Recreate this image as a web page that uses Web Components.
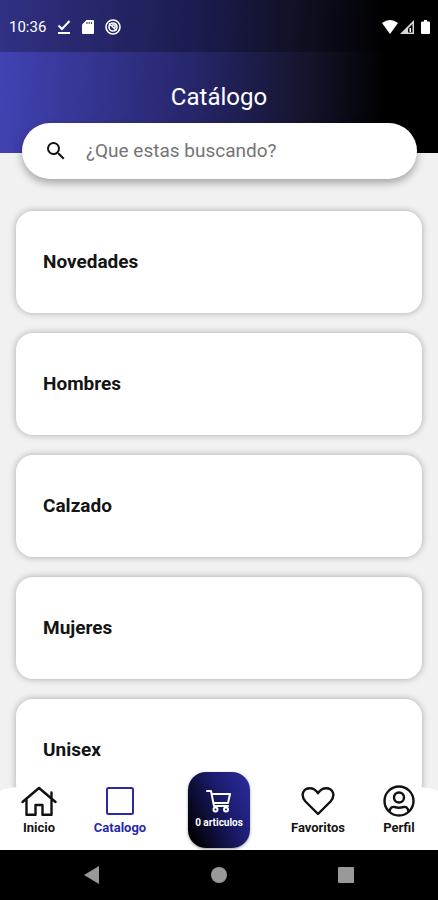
<!DOCTYPE html>
<html lang="es">
<head>
<meta charset="utf-8">
<meta name="viewport" content="width=device-width, initial-scale=1">
<title>Catálogo</title>
<style>
  html, body { height: 100%; }
  body { margin: 0; font-family: Roboto, "Liberation Sans", sans-serif; background: #f1f1f1; color: #141414; }
</style>
</head>
<body>
<catalog-app></catalog-app>
<script>
const define = (name, html, setup) => customElements.define(name, class extends HTMLElement {
  constructor() {
    super();
    const t = document.createElement('template');
    t.innerHTML = html;
    this.attachShadow({ mode: 'open' }).append(t.content.cloneNode(true));
  }
  connectedCallback() { if (setup) setup(this, this.shadowRoot); }
});

define('status-bar', `
<style>
  :host { display: flex; align-items: center; justify-content: space-between; height: 52px; padding: 2px 8px 0 9px; box-sizing: border-box; background: rgba(0,0,0,.26); color: #fff; font-size: 15px; }
  div { display: flex; align-items: center; }
  .left { gap: 11px; }
  .right { gap: 2px; }
  svg { display: block; fill: #fff; }
</style>
<div class="left">
  <span>10:36</span>
  <svg width="14" height="16" viewBox="0 0 14 16"><path d="M1.500 6.500 5 10l7.500-8" fill="none" stroke="#fff" stroke-width="2"/><path d="M1 13h12v2H1z"/></svg>
  <svg width="12" height="14" viewBox="0 0 12 14"><path d="M4.500 0H11a1 1 0 0 1 1 1v12a1 1 0 0 1-1 1H1a1 1 0 0 1-1-1V4.500z"/><path d="M5 2v2M7.200 2v2M9.400 2v2" stroke="#30307c" stroke-width="1"/></svg>
  <svg width="16" height="16" viewBox="0 0 16 16"><g fill="none" stroke="#fff"><circle cx="8" cy="8" r="7" stroke-width="1.600"/><circle cx="8" cy="8" r="4" stroke-width="1.600"/><path d="M4 4.500 11.500 11.500M7 6h3v3" stroke-width="1.500"/></g></svg>
</div>
<div class="right">
  <svg width="16" height="14" viewBox="0 0 16 14"><path d="M0 3Q8-3 16 3L8 14z"/></svg>
  <svg width="14" height="14" viewBox="0 0 14 14"><path d="M14 0v14H0z" opacity=".85"/><path d="M12.500 4v8.500H8V8.500z" fill="#000"/><path d="M9.500 8h1.500v4H9.500z"/></svg>
  <svg width="9" height="14" viewBox="0 0 9 14" style="margin-left:5px"><path d="M3 0h3v1.500h2a1 1 0 0 1 1 1V13a1 1 0 0 1-1 1H1a1 1 0 0 1-1-1V2.500a1 1 0 0 1 1-1h2z"/></svg>
</div>`);

define('search-field', `
<style>
  :host { display: block; }
  label { display: flex; align-items: center; gap: 18px; height: 56px; padding: 0 22px; border-radius: 28px; background: #fff; box-shadow: 0 4px 8px rgba(0,0,0,.32); }
  svg { flex: none; display: block; }
  input { flex: 1; min-width: 0; border: 0; padding: 0; outline: 0; background: none; font: 400 19px/24px Roboto, "Liberation Sans", sans-serif; color: #141414; }
  input::placeholder { color: #747474; opacity: 1; }
</style>
<label>
  <svg width="24" height="24" viewBox="0 0 24 24" fill="#141414"><path d="M15.500 14h-.79l-.28-.27A6.471 6.471 0 0 0 16 9.500 6.500 6.500 0 1 0 9.500 16c1.610 0 3.090-.59 4.230-1.570l.27.28v.79l5 4.990L20.490 19l-4.990-5zm-6 0C7.010 14 5 11.990 5 9.500S7.010 5 9.500 5 14 7.010 14 9.500 11.990 14 9.500 14z"/></svg>
  <input type="search" placeholder="¿Que estas buscando?" aria-label="Buscar">
</label>`);

define('app-header', `
<style>
  :host { display: flow-root; background: linear-gradient(92deg, #4242b4 0%, #26266c 44%, #14142c 70%, #000 88%); }
  h1 { margin: 0; padding: 31px 0 12px; font-weight: 400; font-size: 24px; line-height: 28px; text-align: center; color: #fff; }
  .search { padding: 0 21px 0 22px; margin-bottom: -26px; }
</style>
<slot name="status"></slot>
<h1><slot></slot></h1>
<div class="search"><slot name="search"></slot></div>`);

define('category-card', `
<style>
  :host { display: block; }
  button { display: block; width: 100%; height: 102px; padding: 0 27px; border: 0; border-radius: 17px; background: #fff; box-shadow: 0 0 7px rgba(0,0,0,.3); text-align: left; font: 700 19px/24px Roboto, "Liberation Sans", sans-serif; color: #141414; }
</style>
<button type="button"><slot></slot></button>`);

define('category-list', `
<style>
  :host { display: flex; flex-direction: column; gap: 20px; flex: 1; min-height: 0; overflow: hidden; padding: 58px 16px 0; }
  ::slotted(*) { flex: none; }
</style>
<slot></slot>`);

define('tab-link', `
<style>
  :host { display: block; min-width: 0; }
  a { display: flex; flex-direction: column; align-items: center; gap: 3px; padding-bottom: 14px; text-decoration: none; color: #141414; font-weight: 700; font-size: 13px; line-height: 16px; white-space: nowrap; }
  :host([active]) a { color: #2a2aa8; }
  ::slotted(svg) { display: block; width: 36px; height: 32px; }
</style>
<a href="#"><slot name="icon"></slot><span><slot></slot></span></a>`,
  (el, root) => { root.querySelector('a').href = '#' + el.textContent.trim().toLowerCase(); if (el.hasAttribute('active')) root.querySelector('a').setAttribute('aria-current', 'page'); });

define('cart-button', `
<style>
  :host { display: flex; justify-content: center; }
  button { display: flex; flex-direction: column; align-items: center; gap: 2px; width: 62px; height: 76px; margin-bottom: 2px; padding: 16px 0 0; border: 0; border-radius: 18px; background: linear-gradient(65deg, #000 8%, #1c1c70 60%, #2c2ca0 100%); box-shadow: 0 1px 3px rgba(0,0,0,.4); color: #fff; font: 700 10px/14px Roboto, "Liberation Sans", sans-serif; white-space: nowrap; }
  svg { flex: none; }
</style>
<button type="button">
  <svg width="26" height="26" viewBox="0 0 26 26" fill="none" stroke="#fff" stroke-width="2" stroke-linecap="round" stroke-linejoin="round"><path d="M1 3h4l3 15h14M6 6h18l-2 9H7.500"/><circle cx="9.500" cy="21.500" r="2"/><circle cx="20" cy="21.500" r="2"/></svg>
  <slot></slot>
</button>`);

define('tab-bar', `
<style>
  :host { display: block; position: relative; }
  nav { display: grid; grid-template-columns: 13fr 14fr 19fr 14fr 13fr; grid-template-rows: 100%; align-items: end; height: 63px; background: #fff; border-radius: 24px 24px 0 0 / 5px 5px 0 0; }
</style>
<nav aria-label="Principal"><slot></slot></nav>`);

define('system-nav', `
<style>
  :host { display: grid; grid-template-columns: repeat(3, 1fr); flex: none; height: 50px; padding: 0 28px; background: #000; }
  button { display: grid; place-items: center; border: 0; padding: 0; background: none; }
  svg { fill: #999; display: block; }
</style>
<button type="button" aria-label="Atrás"><svg width="18" height="18" viewBox="0 0 18 18"><path d="M1 9 16 0v18z"/></svg></button>
<button type="button" aria-label="Inicio del sistema"><svg width="18" height="18" viewBox="0 0 18 18"><circle cx="9" cy="9" r="8"/></svg></button>
<button type="button" aria-label="Recientes"><svg width="18" height="18" viewBox="0 0 18 18"><rect x="1" y="1" width="16" height="16" rx="1"/></svg></button>`);

define('catalog-app', `
<style>
  :host { display: flex; flex-direction: column; height: 100vh; overflow: hidden; }
  app-header { flex: none; position: relative; }
  tab-bar { flex: none; margin-top: -4px; }
</style>
<app-header>
  <status-bar slot="status"></status-bar>
  Catálogo
  <search-field slot="search"></search-field>
</app-header>
<category-list>
  <category-card>Novedades</category-card>
  <category-card>Hombres</category-card>
  <category-card>Calzado</category-card>
  <category-card>Mujeres</category-card>
  <category-card>Unisex</category-card>
</category-list>
<tab-bar>
  <tab-link>
    <svg slot="icon" viewBox="0 0 36 32" fill="none" stroke="#111" stroke-width="2.400" stroke-linejoin="round" stroke-linecap="round"><path d="M1.500 17 18 3l16.500 14M5.500 15v14.800h9V20h7v9.800h9V15M30.500 13V7.500"/></svg>
    Inicio
  </tab-link>
  <tab-link active>
    <svg slot="icon" viewBox="0 0 36 32" fill="none" stroke="#2a2aa8" stroke-width="2"><rect x="5" y="3" width="26" height="26" rx="1.500"/></svg>
    Catalogo
  </tab-link>
  <cart-button>0 articulos</cart-button>
  <tab-link>
    <svg slot="icon" viewBox="0 0 36 32" fill="none" stroke="#111" stroke-width="2.400" stroke-linejoin="round"><path d="M18 29 5.500 16.500C-.5 9.500 4 3.200 9.800 3.200c3.700 0 6.200 1.800 8.200 5 2-3.200 4.500-5 8.200-5C32 3.200 36.500 9.500 30.500 16.500z"/></svg>
    Favoritos
  </tab-link>
  <tab-link>
    <svg slot="icon" viewBox="0 0 36 32" fill="none" stroke="#111" stroke-width="2.400"><circle cx="18" cy="16" r="14.500"/><circle cx="18" cy="12.500" r="5"/><path d="M8.500 26.500c.5-4 3-5 5-4.500 3 1 6 1 9 0 2-.5 4.500.5 5 4.500"/></svg>
    Perfil
  </tab-link>
</tab-bar>
<system-nav></system-nav>`);
</script>
</body>
</html>
